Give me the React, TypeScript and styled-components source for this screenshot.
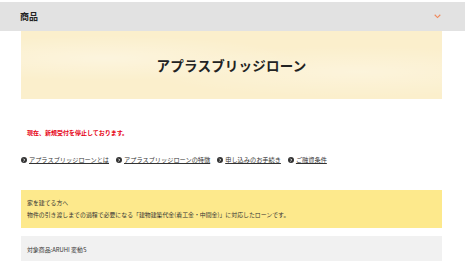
import styled, { createGlobalStyle } from 'styled-components';

const GlobalStyle = createGlobalStyle`
    html, body {
        margin: 0;
        padding: 0;
        background: #fff;
    }
    body {
        font-family: "Noto Sans CJK JP", "Noto Sans", sans-serif;
        color: #222;
    }
`

const Header = styled.div`
    margin-top: 2px;
    height: 29px;
    background: #e2e2e2;
    display: flex;
    align-items: center;
    justify-content: space-between;
    padding: 0 24px 0 20px;
`

const HeaderTitle = styled.h1`
    margin: 0;
    font-size: 9px;
    font-weight: 700;
    color: #222;
`

const Wrap = styled.main`
    width: 421px;
    margin: 0 23px 0 21px;
`

const Banner = styled.div`
    height: 68px;
    display: flex;
    align-items: center;
    justify-content: center;
    background:
        radial-gradient(ellipse at 20% 40%, rgba(255,255,255,0.35), transparent 40%),
        radial-gradient(ellipse at 80% 60%, rgba(255,255,255,0.3), transparent 45%),
        #fbefcc;

    h2 {
        margin: 0;
        font-size: 13.5px;
        font-weight: 700;
        letter-spacing: 0.2px;
        color: #222;
    }
`

const Notice = styled.p`
    margin: 30px 0 0 6px;
    font-size: 6px;
    line-height: 8px;
    font-weight: 700;
    color: #e60012;
`

const LinkList = styled.ul`
    list-style: none;
    margin: 19px 0 0;
    padding: 0;
    display: flex;
    gap: 7px;
`

const LinkItem = styled.li`
    display: flex;
    align-items: center;
    gap: 2px;
    font-size: 6.2px;
    line-height: 8px;
    color: #333;

    span {
        text-decoration: underline;
    }
`

const Box = styled.div<{ $bg: string; $mt: number; $pt: number }>`
    margin-top: ${p => p.$mt}px;
    background: ${p => p.$bg};
    padding: ${p => p.$pt}px 6px 7px;
    font-size: 5.9px;
    line-height: 12px;
    color: #333;

    p {
        margin: 0;
    }
`

const CircleArrow = () => (
    <svg width="6" height="6" viewBox="0 0 10 10">
        <circle cx="5" cy="5" r="5" fill="#333" />
        <path d="M4 2.8 L6.2 5 L4 7.2" stroke="#fff" strokeWidth="1.5" fill="none" />
    </svg>
)

const links = ['アプラスブリッジローンとは', 'アプラスブリッジローンの特徴', '申し込みのお手続き', 'ご融資条件'];

export default function App() {
    return (
        <>
            <GlobalStyle />
            <Header>
                <HeaderTitle>商品</HeaderTitle>
                <svg width="7" height="5" viewBox="0 0 10 7">
                    <path d="M1 1 L5 5 L9 1" stroke="#f08a5d" strokeWidth="1.6" fill="none" />
                </svg>
            </Header>
            <Wrap>
                <Banner>
                    <h2>アプラスブリッジローン</h2>
                </Banner>
                <Notice>現在、新規受付を停止しております。</Notice>
                <LinkList>
                    {links.map(l => (
                        <LinkItem key={l}>
                            <CircleArrow />
                            <span>{l}</span>
                        </LinkItem>
                    ))}
                </LinkList>
                <Box $bg="#fde98c" $mt={26} $pt={7}>
                    <p>家を建てる方へ</p>
                    <p>物件の引き渡しまでの過程で必要になる「建物建築代金(着工金・中間金)」に対応したローンです。</p>
                </Box>
                <Box $bg="#f1f1f1" $mt={8} $pt={8}>
                    <p>対象商品:ARUHI 変動S</p>
                </Box>
            </Wrap>
        </>
    )
}
